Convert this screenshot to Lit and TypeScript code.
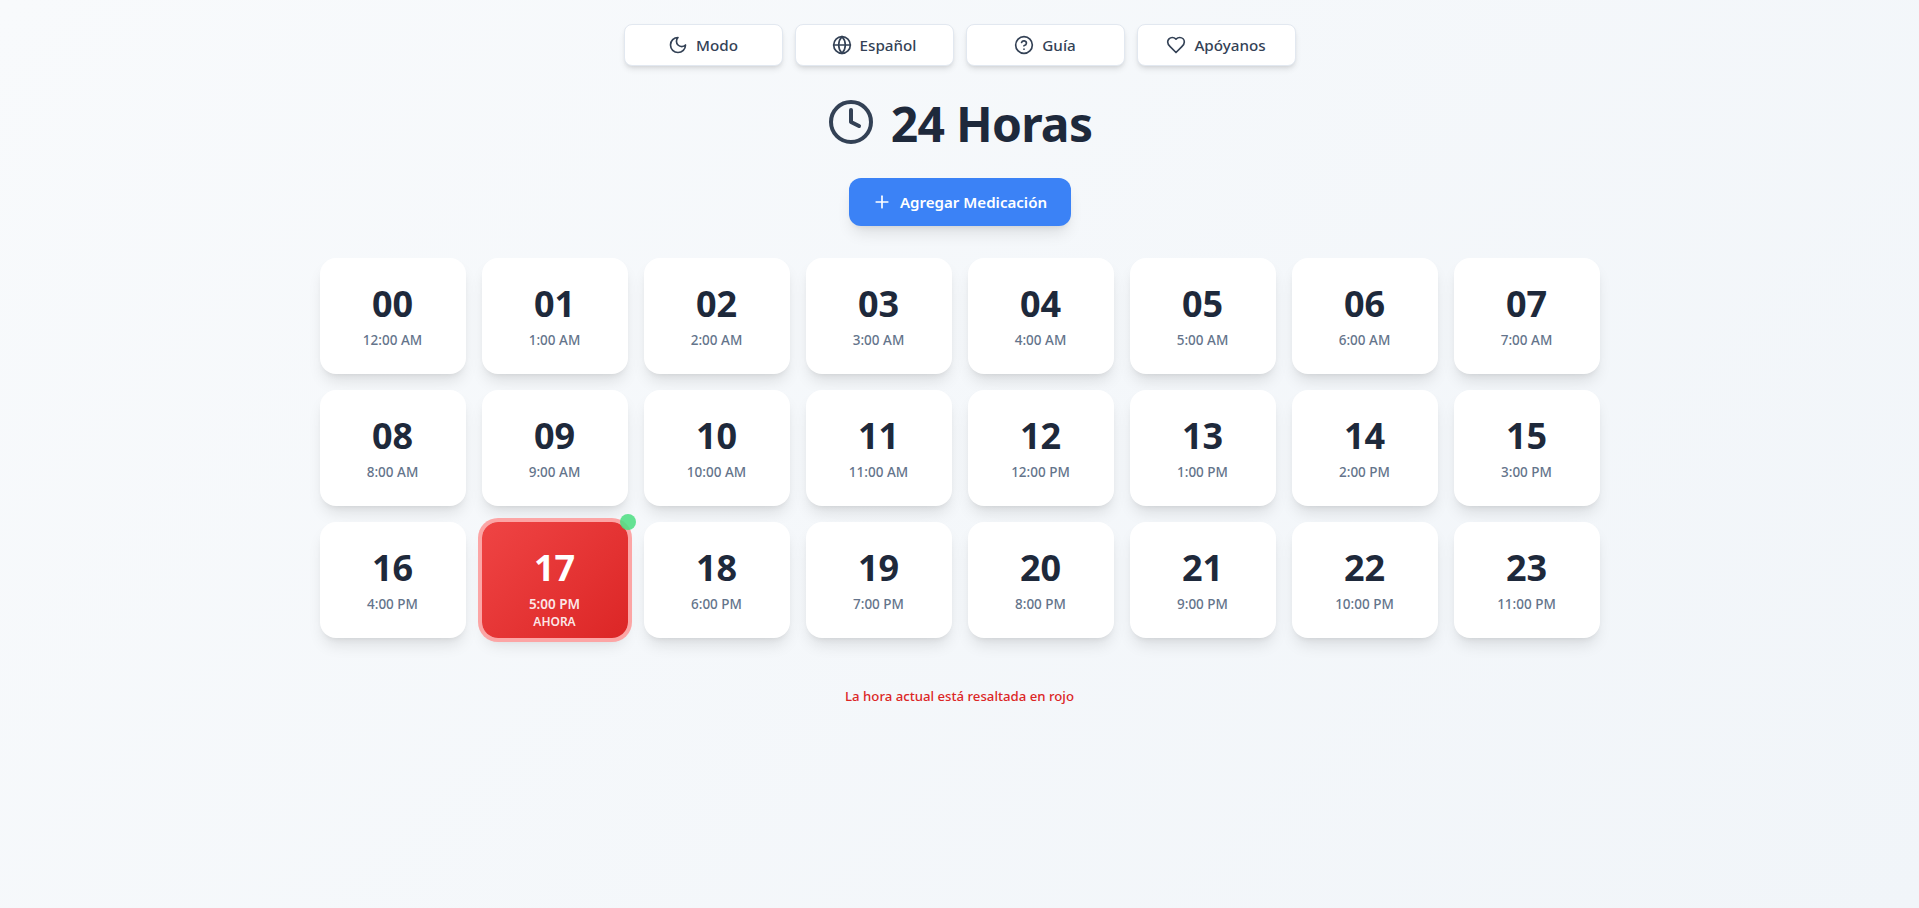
import { LitElement, html, css, svg } from "lit";
import { customElement } from "lit/decorators.js";

const icon = (content: unknown, cls = "ic") => html`<svg class=${cls} viewBox="0 0 24 24" fill="none" stroke="currentColor" stroke-width="2" stroke-linecap="round" stroke-linejoin="round">${content}</svg>`;

const moon = svg`<path d="M12 3a6 6 0 0 0 9 9 9 9 0 1 1-9-9Z"/>`;
const globe = svg`<circle cx="12" cy="12" r="10"/><path d="M12 2a14.5 14.5 0 0 0 0 20 14.5 14.5 0 0 0 0-20"/><path d="M2 12h20"/>`;
const help = svg`<circle cx="12" cy="12" r="10"/><path d="M9.09 9a3 3 0 0 1 5.83 1c0 2-3 3-3 3"/><path d="M12 17h.01"/>`;
const heart = svg`<path d="M19 14c1.49-1.46 3-3.21 3-5.5A5.5 5.5 0 0 0 16.5 3c-1.76 0-3 .5-4.5 2-1.5-1.5-2.74-2-4.5-2A5.5 5.5 0 0 0 2 8.5c0 2.3 1.5 4.05 3 5.5l7 7Z"/>`;
const clock = svg`<circle cx="12" cy="12" r="10"/><polyline points="12 6 12 12 16 14"/>`;
const plus = svg`<path d="M5 12h14"/><path d="M12 5v14"/>`;

const fmt = (h: number) => `${h % 12 === 0 ? 12 : h % 12}:00 ${h < 12 ? "AM" : "PM"}`;

@customElement("app-root")
export class AppRoot extends LitElement {
  static styles = css`
    :host {
      display: block;
      min-height: 908px;
      background: linear-gradient(135deg, #f8fafc 0%, #f1f5f9 100%);
      font-family: "Noto Sans", "Open Sans", sans-serif;
      color: #1e293b;
    }
    * { box-sizing: border-box; }
    .page {
      width: 1280px;
      margin: 0 auto;
      padding-top: 24px;
      display: flex;
      flex-direction: column;
      align-items: center;
    }
    .nav {
      display: grid;
      grid-template-columns: repeat(4, 159px);
      gap: 12px;
      margin-bottom: 32px;
    }
    .nav-btn {
      height: 42px;
      display: flex;
      align-items: center;
      justify-content: center;
      gap: 8px;
      background: #fff;
      border: 1px solid #e2e8f0;
      border-radius: 8px;
      box-shadow: 0 4px 6px -1px rgba(0,0,0,.1), 0 2px 4px -2px rgba(0,0,0,.1);
      color: #334155;
      font: 500 15.2px "Noto Sans", sans-serif;
      padding: 0;
    }
    .ic { width: 20px; height: 20px; flex: none; }
    h1 {
      margin: 0 0 32px;
      display: flex;
      align-items: center;
      gap: 16px;
      height: 48px;
      font-size: 48px;
      font-weight: 700;
      line-height: 48px;
      letter-spacing: -0.75px;
      color: #1e293b;
    }
    h1 span { padding-top: 4px; }
    .big { width: 48px; height: 48px; color: #334155; }
    .add {
      width: 222px;
      height: 48px;
      display: flex;
      align-items: center;
      justify-content: center;
      gap: 8px;
      margin-bottom: 32px;
      background: #3b82f6;
      color: #fff;
      border: none;
      border-radius: 12px;
      font: 600 15.1px "Noto Sans", sans-serif;
      box-shadow: 0 10px 15px -3px rgba(0,0,0,.1), 0 4px 6px -4px rgba(0,0,0,.1);
    }
    .grid {
      display: grid;
      grid-template-columns: repeat(8, 146px);
      gap: 16px;
    }
    .card {
      position: relative;
      height: 116px;
      padding-top: 26px;
      background: #fff;
      border-radius: 16px;
      box-shadow: 0 10px 15px -3px rgba(0,0,0,.1), 0 4px 6px -4px rgba(0,0,0,.1);
      text-align: center;
    }
    .num { font-size: 36px; font-weight: 700; line-height: 40px; margin-bottom: 6px; }
    .lbl { font-size: 13.5px; font-weight: 500; line-height: 20px; color: #64748b; }
    .now {
      background: linear-gradient(135deg, #ef4444, #dc2626);
      box-shadow: 0 0 0 4px #fca5a5, 0 10px 15px -3px rgba(0,0,0,.1), 0 4px 6px -4px rgba(0,0,0,.1);
      color: #fff;
    }
    .now .lbl { color: rgba(255,255,255,.9); font-weight: 600; }
    .ahora { font-size: 12px; font-weight: 600; line-height: 16px; color: rgba(255,255,255,.9); }
    .dot {
      position: absolute;
      top: -8px;
      right: -8px;
      width: 16px;
      height: 16px;
      border-radius: 50%;
      background: #4ade80;
      opacity: .85;
    }
    .foot {
      margin: 48px 0 0;
      font-size: 13.2px;
      font-weight: 500;
      line-height: 20px;
      color: #dc2626;
      text-align: center;
    }
  `;

  render() {
    const nav: [unknown, string][] = [[moon, "Modo"], [globe, "Español"], [help, "Guía"], [heart, "Apóyanos"]];
    const hours = Array.from({ length: 24 }, (_, i) => i);
    return html`<div class="page">
      <div class="nav">
        ${nav.map(([i, t]) => html`<button class="nav-btn">${icon(i)}<span>${t}</span></button>`)}
      </div>
      <h1>${icon(clock, "big")}<span>24 Horas</span></h1>
      <button class="add">${icon(plus)}<span>Agregar Medicación</span></button>
      <div class="grid">
        ${hours.map((h) => {
          const now = h === 17;
          return html`<div class="card ${now ? "now" : ""}">
            <div class="num">${String(h).padStart(2, "0")}</div>
            <div class="lbl">${fmt(h)}</div>
            ${now ? html`<div class="ahora">AHORA</div><span class="dot"></span>` : ""}
          </div>`;
        })}
      </div>
      <p class="foot">La hora actual está resaltada en rojo</p>
    </div>`;
  }
}
